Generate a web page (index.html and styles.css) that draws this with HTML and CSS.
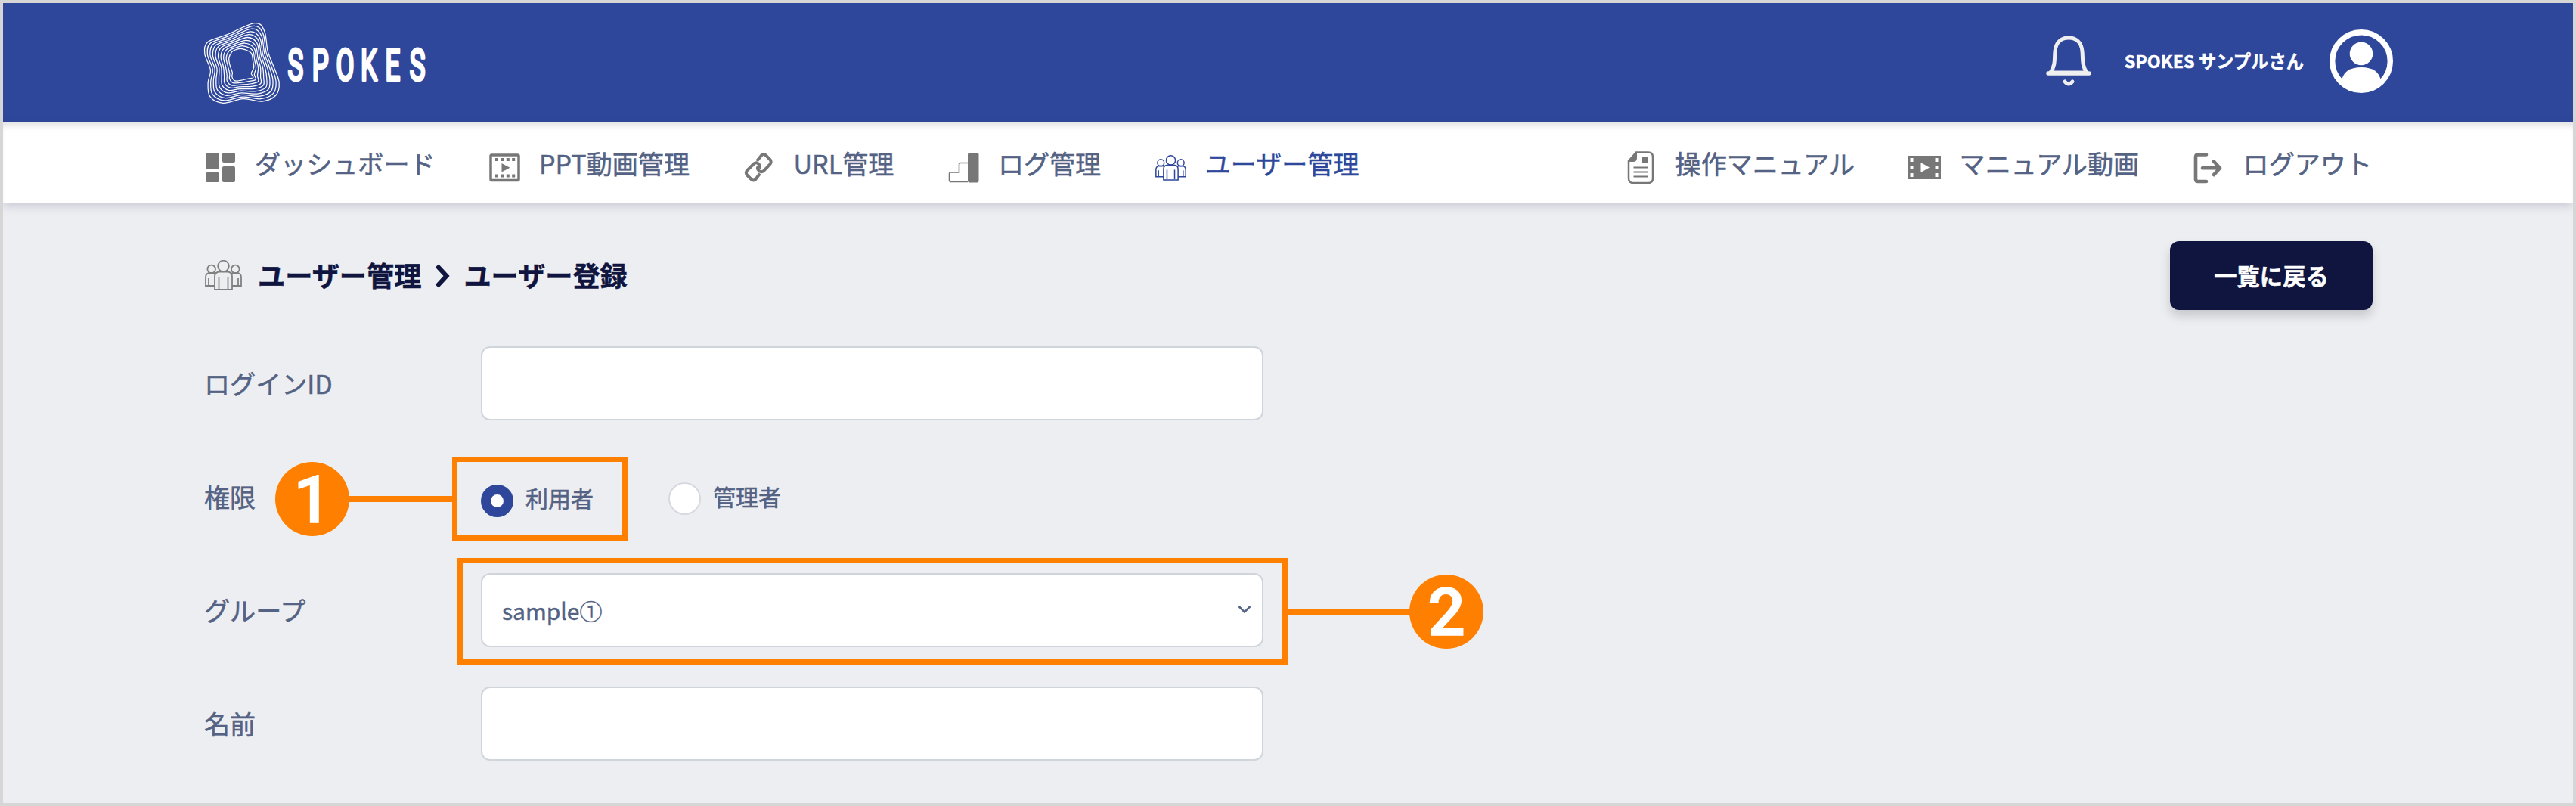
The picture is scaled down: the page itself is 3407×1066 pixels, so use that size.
FILE: index.html
```html
<!doctype html>
<html lang="ja">

<head>
    <meta charset="utf-8" />
    <title>ユーザー登録 | SPOKES</title>

    <link rel="stylesheet" href="styles.css">
</head>

<body>
    <svg class="defs">
        <symbol id="users" viewBox="0 0 49 40">
            <g fill="none" stroke="currentColor" stroke-width="1.8">
                <circle cx="24.5" cy="8" r="7.3" />
                <circle cx="8.7" cy="12" r="5.3" />
                <circle cx="40.3" cy="12" r="5.3" />
                <path d="M13 39V22q0-6.500 7-6.500h9q7 0 7 6.500v17zM18.500 38V23M30.500 38V23" />
                <path d="M13 34H1V23q0-6 6-6h4q2 0 3 1M5 33V24" />
                <path d="M36 34h12V23q0-6-6-6h-4q-2 0-3 1M44 33V24" />
            </g>
        </symbol>
    </svg>

    <header class="header">
        <div class="logo">
            <svg id="logo-mark" class="logo-mark" viewBox="90 86 300 322"></svg>
            <svg class="logo-text" width="200" height="70" viewBox="0 0 200 70">
                <text transform="scale(.6 1)" x="4 58 111 165 219 273" y="56">SPOKES</text>
            </svg>
        </div>
        <div class="account">
            <svg class="bell" viewBox="0 0 60 68">
                <path d="M6 49C13 39 11 30 12 21C13 9 20 3 30 3S47 9 48 21C49 30 47 39 54 49z" fill="none" stroke="#efefef" stroke-width="5" stroke-linejoin="round" />
                <path d="M3 50h54" stroke="#efefef" stroke-width="5.500" stroke-linecap="round" />
                <path d="M25 61q5 6 10 0" fill="none" stroke="#efefef" stroke-width="5" stroke-linecap="round" />
            </svg>
            <span class="account-name">SPOKES サンプルさん</span>
            <svg class="avatar" viewBox="0 0 84 84">
                <circle cx="42" cy="42" r="38.300" fill="none" stroke="#fff" stroke-width="7.400" />
                <circle cx="42" cy="32" r="15.300" fill="#fff" />
                <path d="M16 68Q19 50 42 50T68 68A37 37 0 0 1 16 68z" fill="#fff" />
            </svg>
        </div>
    </header>

    <nav class="nav">
        <a class="nav-item dashboard">
            <svg class="nav-icon" viewBox="0 0 41 41" fill="#777">
                <rect x="1" y="1" width="18" height="22" rx="2" />
                <rect x="1" y="27" width="18" height="13" rx="2" />
                <rect x="23" y="1" width="17" height="13" rx="2" />
                <rect x="23" y="19" width="17" height="21" rx="2" />
            </svg>
            ダッシュボード
        </a>
        <a class="nav-item ppt">
            <svg class="nav-icon" viewBox="0 0 41 41">
                <rect x="2" y="4" width="37" height="33.500" rx="1.500" fill="none" stroke="#777" stroke-width="3.500" />
                <path d="M8 10h27M8 31.500h27" fill="none" stroke="#777" stroke-width="4" stroke-dasharray="4 3.400" />
                <path d="M16.500 15v11.500l11-5.800z" fill="#777" />
            </svg>
            PPT動画管理
        </a>
        <a class="nav-item url">
            <svg class="nav-icon" viewBox="0 0 41 41" fill="none" stroke="#777" stroke-width="4">
                <path d="M17 12l6-7.500q3-3 6 0l5 5q3 3 .5 6.500l-8.500 9q-3 2.500-6 0q-3.500-3-1-6" />
                <path d="M21 28.500l-5.500 7.500q-3 3-6 0l-5-5q-3-3-.5-6.500l9-9q3-2.500 6 0q3 3 1 6" />
            </svg>
            URL管理
        </a>
        <a class="nav-item log">
            <svg class="nav-icon" viewBox="0 0 41 41">
                <path d="M26 39.500H3.500q-2 0-2-2V29q0-2 2-2H14.500V16.500q0-2 2-2H26" fill="none" stroke="#777" stroke-width="1.600" />
                <rect x="26" y="1" width="14.500" height="39.500" rx="2.500" fill="#777" />
            </svg>
            ログ管理
        </a>
        <a class="nav-item active">
            <svg class="nav-icon"><use href="#users" /></svg>
            ユーザー管理
        </a>
        <a class="nav-item manual">
            <svg class="nav-icon" viewBox="0 0 36 44" fill="none" stroke="#777">
                <path d="M12 1.500H28q6 0 6 6V36q0 6-6 6H8q-6 0-6-6V13z" stroke-width="2.500" />
                <path d="M13 1v8q0 5-5 5H2z" fill="#777" stroke="none" />
                <path d="M20 8h7v7h-7z" fill="#777" stroke="none" />
                <path d="M8.500 21.500h19M8.500 27.500h19M8.500 33.500h19" stroke-width="2.200" />
            </svg>
            操作マニュアル
        </a>
        <a class="nav-item movie">
            <svg class="nav-icon" viewBox="0 0 44 31">
                <path d="M0 0h44v31H0z" fill="#777" />
                <path d="M3.500 3h4v5h-4zM3.500 13h4v5h-4zM3.500 23h4v5h-4zM36.500 3h4v5h-4zM36.500 13h4v5h-4zM36.500 23h4v5h-4zM17.500 9v13l11.500-6.500z" fill="#fff" />
            </svg>
            マニュアル動画
        </a>
        <a class="nav-item logout">
            <svg class="nav-icon" viewBox="0 0 38 42" fill="none" stroke="#777" stroke-width="4.600" stroke-linecap="round" stroke-linejoin="round">
                <path d="M17 3.500H6q-3 0-3 3V36q0 3 3 3H17" />
                <path d="M12 21.300H34M27 12.500l8 8.800-8 8.800" />
            </svg>
            ログアウト
        </a>
    </nav>

    <main class="content">
        <div class="title-bar">
            <h1 class="title">
                <svg class="title-icon"><use href="#users" /></svg>
                <span class="title-text">ユーザー管理</span>
                <svg class="title-arrow" viewBox="0 0 20 32">
                    <path d="M3 2.500L15.500 16 3 29.500" fill="none" stroke="#0f153e" stroke-width="6" />
                </svg>
                <span class="title-text">ユーザー登録</span>
            </h1>
            <button class="back-button">一覧に戻る</button>
        </div>

        <form class="form">
            <div class="row">
                <label class="label">ログインID</label>
                <input class="field" type="text">
            </div>
            <div class="row">
                <span class="label">権限</span>
                <label class="radio checked"><i class="radio-mark"></i>利用者</label>
                <label class="radio"><i class="radio-mark"></i>管理者</label>
                <div class="callout callout-role"></div>
                <div class="callout-line line-role"></div>
                <div class="callout-number number-role">1</div>
            </div>
            <div class="row">
                <label class="label">グループ</label>
                <div class="field select">
                    sample①
                    <svg class="select-arrow" viewBox="0 0 18 12">
                        <path d="M1.500 2L9 9.500 16.500 2" fill="none" stroke="#546283" stroke-width="2.500" />
                    </svg>
                </div>
                <div class="callout callout-group"></div>
                <div class="callout-line line-group"></div>
                <div class="callout-number number-group">2</div>
            </div>
            <div class="row">
                <label class="label">名前</label>
                <input class="field" type="text">
            </div>
        </form>
    </main>

    <script>
        const outer = [[290, 88], [329, 118], [343, 200], [368, 265], [388, 325], [375, 375], [320, 399], [245, 389], [165, 406], [113, 380], [105, 325], [115, 275], [92, 210], [104, 163], [180, 134]];
        const inner = [[240, 190], [276, 206], [284, 240], [287, 265], [277, 288], [285, 304], [265, 309], [222, 318], [208, 315], [200, 300], [202, 285], [192, 255], [188, 228], [200, 202], [217, 193]];
        const rings = 10;

        // closed Catmull-Rom curve through the points
        function curve(pts) {
            const n = pts.length;
            let d = `M${pts[0]}`;
            for (let i = 0; i < n; i++) {
                const a = pts[(i + n - 1) % n], b = pts[i], c = pts[(i + 1) % n], e = pts[(i + 2) % n];
                d += `C${b[0] + (c[0] - a[0]) / 6},${b[1] + (c[1] - a[1]) / 6} ${c[0] - (e[0] - b[0]) / 6},${c[1] - (e[1] - b[1]) / 6} ${c}`;
            }
            return d + 'Z';
        }

        for (let r = 0; r < rings; r++) {
            const t = r / (rings - 1);
            const path = document.createElementNS('http://www.w3.org/2000/svg', 'path');
            path.setAttribute('d', curve(outer.map((p, i) => [
                p[0] + (inner[i][0] - p[0]) * t,
                p[1] + (inner[i][1] - p[1]) * t
            ])));
            document.getElementById('logo-mark').appendChild(path);
        }
    </script>
</body>

</html>
```
FILE: styles.css
```css
* {
    box-sizing: border-box;
}

body {
    margin: 0;
    height: 1066px;
    border: 4px solid #d6d6d6;
    background-color: #edeef2;
    color: #546283;
    font-family: "Noto Sans CJK JP", sans-serif;
    font-size: 34.1px;
    line-height: 1;
    -webkit-text-stroke: 0.5px;
    overflow: hidden;
}

.defs {
    display: none;
}

.header {
    display: flex;
    justify-content: space-between;
    align-items: center;
    height: 158px;
    padding: 0 238px 0 266px;
    background-color: #2e479b;
}

.logo {
    display: flex;
    align-items: center;
    gap: 8px;
}

.logo-mark {
    width: 100px;
    height: 107px;
    fill: none;
    stroke: #fff;
    stroke-width: 3.8;
    overflow: visible;
}

.logo-text {
    margin-top: 3px;
    fill: #fff;
    stroke: #fff;
    stroke-width: 4;
    stroke-linejoin: round;
    font-family: Roboto, sans-serif;
    font-size: 58px;
    font-weight: 400;
    overflow: visible;
}

.account {
    display: flex;
    align-items: center;
    margin-top: -4px;
    color: #fff;
}

.bell {
    width: 60px;
    height: 68px;
    margin-right: 44px;
}

.account-name {
    font-size: 23.3px;
    font-weight: bold;
    margin-right: 34px;
}

.avatar {
    width: 84px;
    height: 84px;
}

.nav {
    display: flex;
    align-items: center;
    gap: 71.5px;
    height: 107px;
    padding: 0 266px 0 267px;
    background-color: #fff;
    box-shadow: inset 0 8px 8px -4px rgba(0, 0, 0, .12), 0 3px 12px rgba(60, 60, 100, .22);
}

.nav-item {
    display: flex;
    align-items: center;
    white-space: nowrap;
}

.nav-icon {
    width: 41px;
    height: 41px;
    margin: 12px 25px 0 0;
}

.active {
    color: #2e479b;
}

.active .nav-icon {
    height: 34px;
}

.manual {
    margin-left: auto;
    margin-right: -2px;
}

.manual .nav-icon {
    width: 36px;
    height: 44px;
    margin-right: 28px;
}

.movie .nav-icon {
    width: 44px;
    height: 31px;
}

.logout .nav-icon {
    width: 38px;
    height: 42px;
    margin-right: 28px;
}

.content {
    padding: 50px 266px 0 266px;
}

.title-bar {
    display: flex;
    justify-content: space-between;
    align-items: center;
    height: 91px;
}

.title {
    display: flex;
    align-items: center;
    margin: 0;
    color: #0f153e;
    font-size: 36.2px;
}

.title-text {
    margin-top: -3px;
}

.title-icon {
    width: 49px;
    height: 40px;
    margin: 0 21px 2px 1px;
    color: #808080;
}

.title-arrow {
    width: 20px;
    height: 32px;
    margin: 0 18px;
}

.back-button {
    width: 268px;
    height: 91px;
    margin-right: -1px;
    padding-bottom: 3px;
    border: none;
    border-radius: 12px;
    background-color: #0f153e;
    color: #fff;
    font-family: inherit;
    font-size: 30.3px;
    font-weight: bold;
    -webkit-text-stroke: 0.5px;
    box-shadow: 0 8px 14px rgba(0, 0, 0, .16);
}

.form {
    display: flex;
    flex-direction: column;
    gap: 52px;
    margin-top: 48px;
}

.row {
    position: relative;
    display: flex;
    align-items: center;
    height: 98px;
}

.label {
    width: 366px;
    margin-top: -1px;
}

.field {
    width: 1035px;
    height: 98px;
    border: 2px solid #d0d4db;
    border-radius: 12px;
    background-color: #fff;
}

.select {
    display: flex;
    align-items: center;
    justify-content: space-between;
    padding: 0 14px 0 26px;
    font-size: 30px;
}

.select-arrow {
    width: 18px;
    height: 12px;
    margin-top: -2px;
}

.radio {
    display: flex;
    align-items: center;
    gap: 16px;
    width: 248px;
    margin-top: -3px;
    font-size: 30px;
}

.radio-mark {
    width: 43px;
    height: 43px;
    margin-top: 8px;
    border: 2px solid #d6d9df;
    border-radius: 50%;
    background-color: #fff;
}

.checked {
    padding-top: 5px;
}

.checked .radio-mark {
    border: 13.5px solid #2e479b;
}

/* numbered callouts over the form */
.callout {
    position: absolute;
    border: 7.5px solid #ff8000;
}

.callout-role {
    left: 328px;
    top: -4px;
    width: 232px;
    height: 111px;
}

.callout-group {
    left: 335px;
    top: -20px;
    width: 1098px;
    height: 141px;
}

.callout-line {
    position: absolute;
    height: 7.5px;
    background-color: #ff8000;
}

.line-role {
    left: 191px;
    top: 48px;
    width: 140px;
}

.line-group {
    left: 1431px;
    top: 47px;
    width: 166px;
}

.callout-number {
    position: absolute;
    width: 98px;
    height: 98px;
    border-radius: 50%;
    background-color: #ff8000;
    color: #fff;
    font-family: Roboto, sans-serif;
    font-size: 88px;
    font-weight: 500;
    line-height: 100px;
    text-align: center;
    -webkit-text-stroke: 1.5px;
}

.number-role {
    left: 94px;
    top: 3px;
}

.number-group {
    left: 1594px;
    top: 2px;
}
```
